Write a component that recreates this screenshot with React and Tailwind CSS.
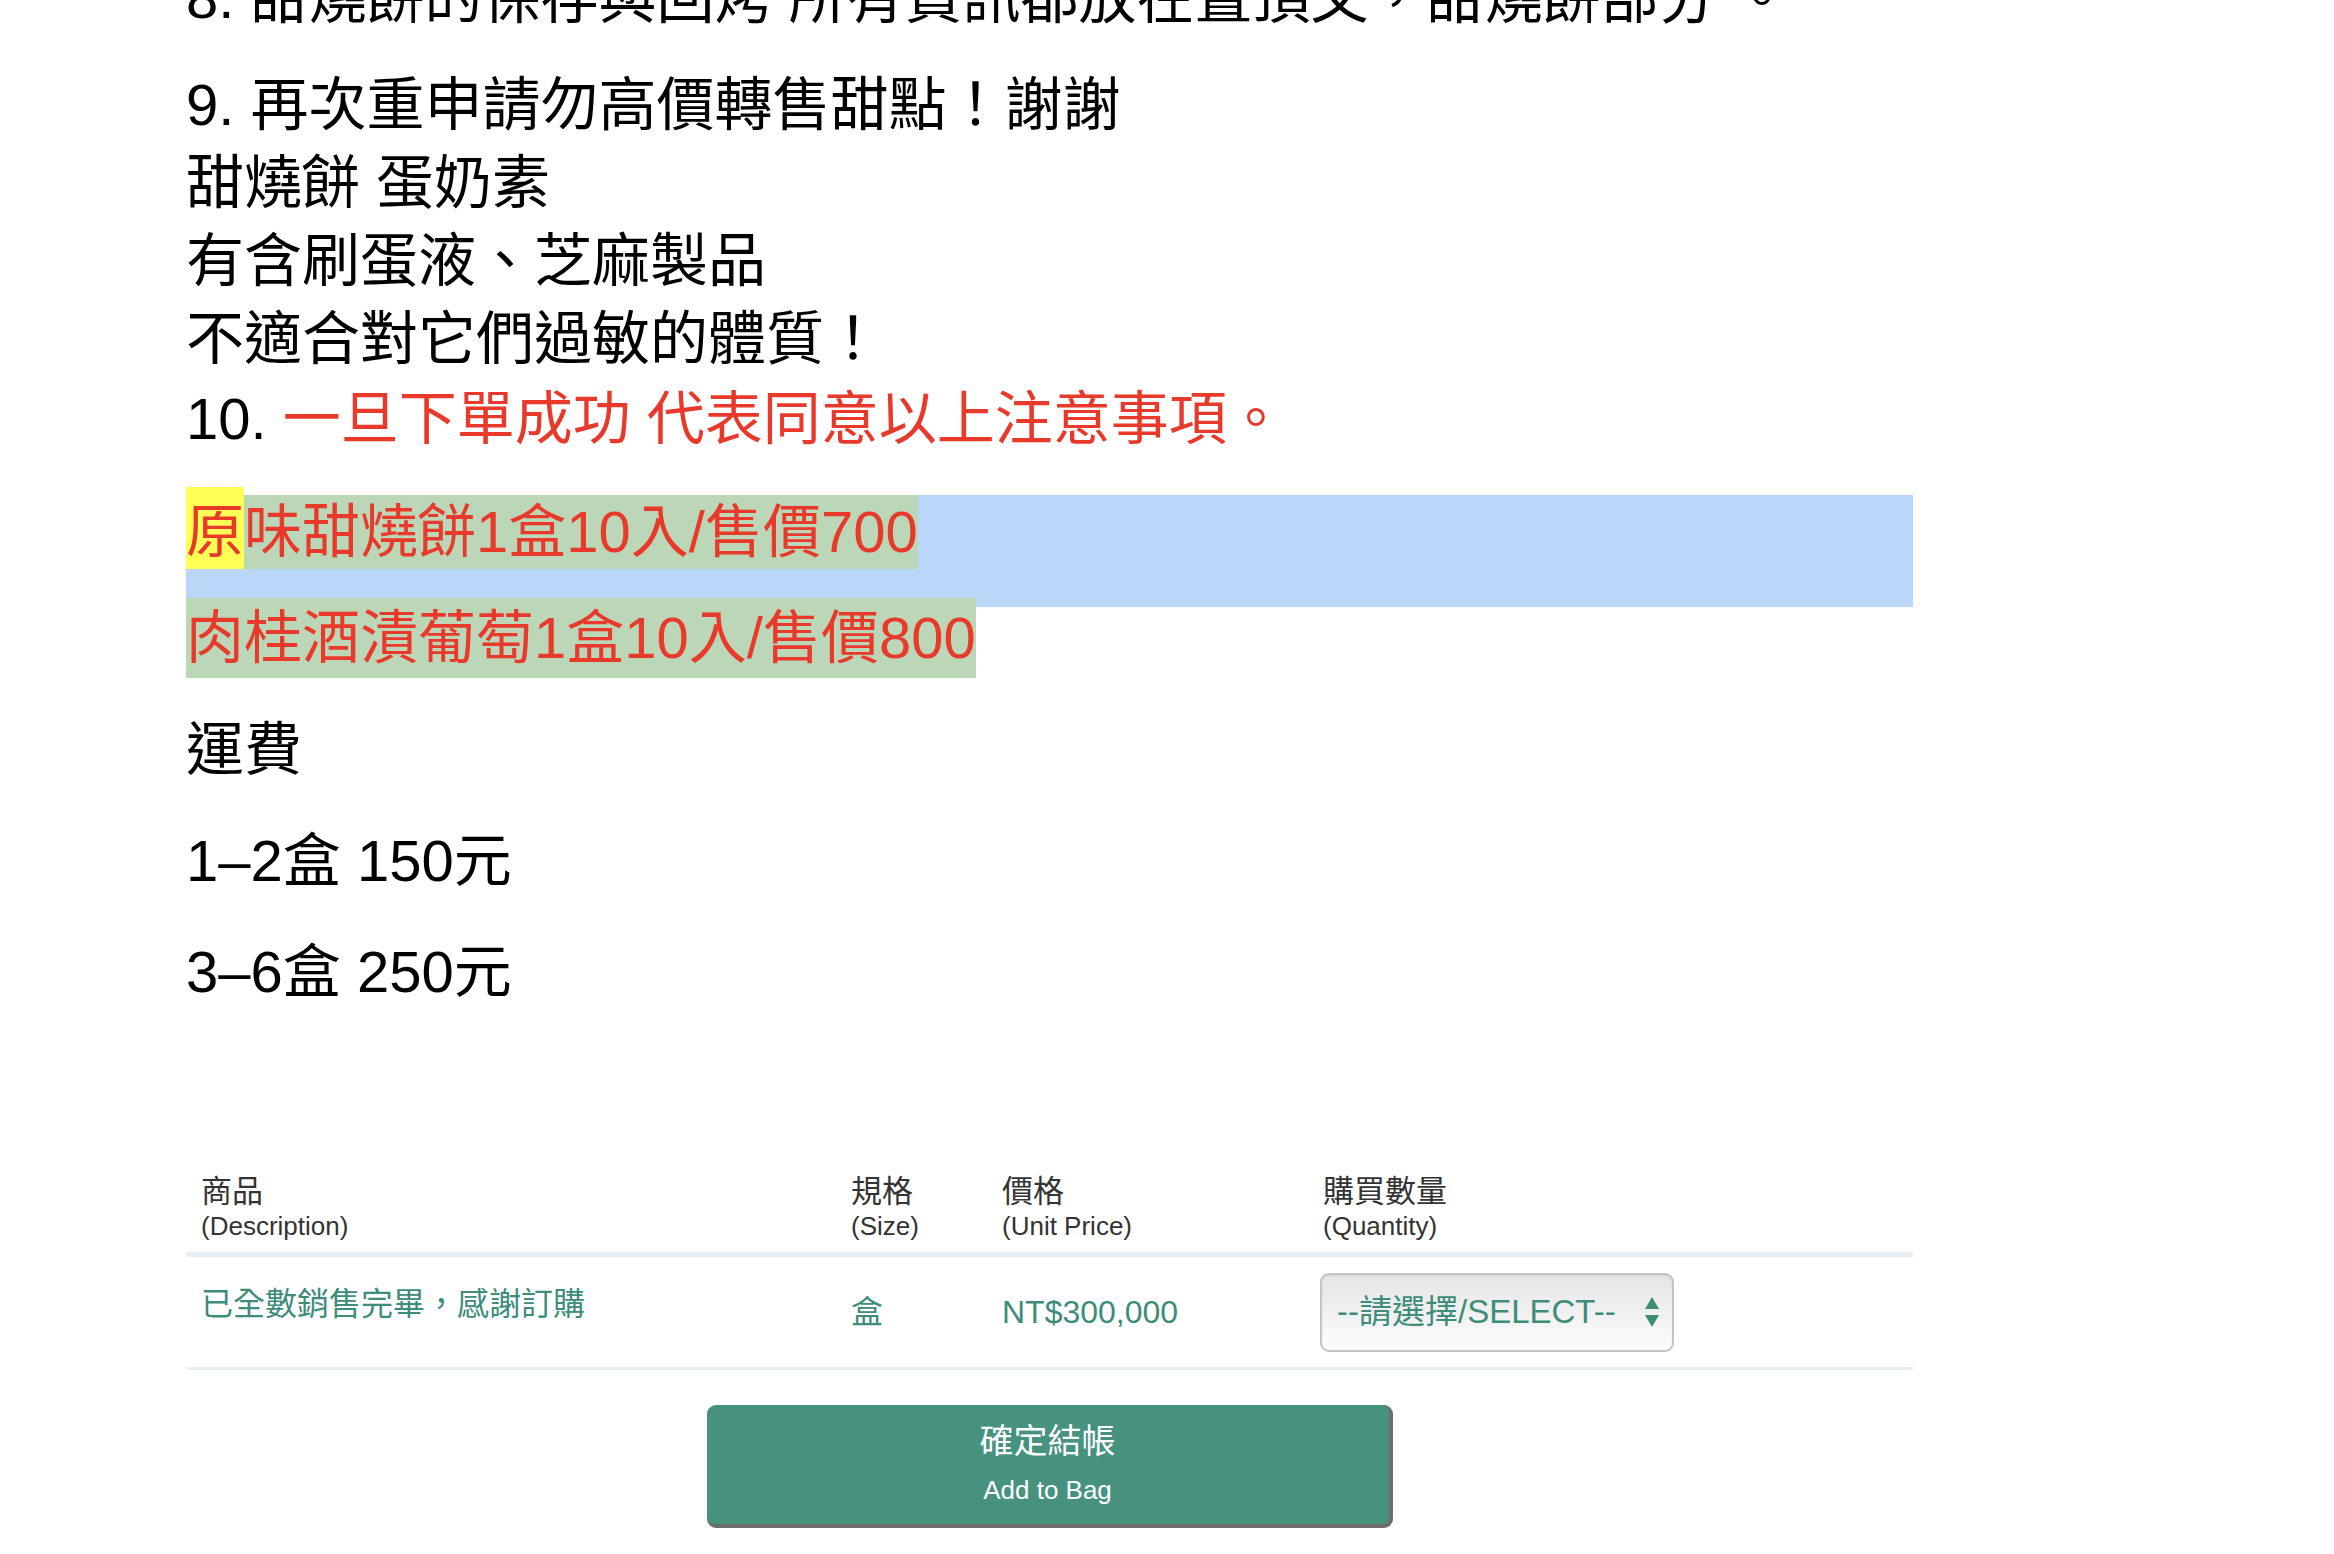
import React from 'react'

const font = { fontFamily: '"Liberation Sans", "Noto Sans CJK TC", sans-serif' }

const Arrows = () => (
  <svg width="16" height="32" viewBox="0 0 16 32" className="shrink-0">
    <path d="M8 1 L15 13 L1 13 Z" fill="#3e8c7a" />
    <path d="M1 19 L15 19 L8 31 Z" fill="#3e8c7a" />
  </svg>
)

const HeadCell = ({ zh, en }) => (
  <th className="pl-[15px] pt-[15px] pb-[10px] text-left font-normal text-[#333]">
    <div className="text-[31px] leading-[36px]">{zh}</div>
    <div className="text-[26px] leading-[32px]">{en}</div>
  </th>
)

const App = () => {
  return (
    <div className="min-h-[1554px] bg-white overflow-hidden" style={font}>
      <div className="ml-[186px] w-[1727px] text-black">
        {/* notes */}
        <div className="-mt-[41px] mb-[29px] text-[58px] leading-[78px] whitespace-nowrap">
          8. 甜燒餅的保存與回烤 所有資訊都放在置頂文，甜燒餅部分 。
        </div>
        <div className="text-[58px] leading-[78px] whitespace-nowrap">
          <div>9. 再次重申請勿高價轉售甜點！謝謝</div>
          <div>甜燒餅 蛋奶素</div>
          <div>有含刷蛋液、芝麻製品</div>
          <div>不適合對它們過敏的體質！</div>
          <div className="mt-[2px]">
            10. <span className="text-[#e8392b]">一旦下單成功 代表同意以上注意事項。</span>
          </div>
        </div>

        {/* price lines */}
        <div className="mt-[37px] h-[112px] bg-[#bad6f9] text-[58px] text-[#e8392b] whitespace-nowrap">
          <div className="leading-[74px]">
            <span className="inline-block bg-[#ffff55] shadow-[0_-8px_0_#ffff55]">原</span>
            <span className="inline-block bg-[#bcd6b8]">味甜燒餅1盒10入/售價700</span>
          </div>
        </div>
        <div className="-mt-[9px] text-[58px] leading-[80px] text-[#e8392b] whitespace-nowrap">
          <span className="inline-block bg-[#bcd6b8]">肉桂酒漬葡萄1盒10入/售價800</span>
        </div>

        {/* shipping */}
        <div className="mt-[33px] text-[58px] leading-[78px]">運費</div>
        <div className="mt-[33px] text-[58px] leading-[78px]">1–2盒 150元</div>
        <div className="mt-[33px] text-[58px] leading-[78px]">3–6盒 250元</div>

        {/* product table */}
        <table className="mt-[148px] w-full table-fixed border-collapse">
          <colgroup>
            <col className="w-[650px]" />
            <col className="w-[151px]" />
            <col className="w-[321px]" />
            <col />
          </colgroup>
          <thead>
            <tr className="border-b-[5px] border-[#e6eef7]">
              <HeadCell zh="商品" en="(Description)" />
              <HeadCell zh="規格" en="(Size)" />
              <HeadCell zh="價格" en="(Unit Price)" />
              <HeadCell zh="購買數量" en="(Quantity)" />
            </tr>
          </thead>
          <tbody>
            <tr className="h-[114px] border-b-[3px] border-[#e8eff7] text-[32px] text-[#3e8c7a]">
              <td className="pl-[15px] pt-[27px] align-top leading-[40px]">已全數銷售完畢，感謝訂購</td>
              <td className="pl-[15px] align-middle">盒</td>
              <td className="pl-[15px] align-middle">NT$300,000</td>
              <td className="pl-[12px] align-middle">
                <div className="flex h-[79px] w-[354px] items-center justify-between rounded-[9px] border-2 border-[#c4c4c4] bg-gradient-to-b from-[#e5e5e5] to-[#fdfdfd] pl-[15px] pr-[12px] shadow-[inset_0_1px_2px_rgba(0,0,0,0.08)]">
                  <span className="text-[33px] whitespace-nowrap">--請選擇/SELECT--</span>
                  <Arrows />
                </div>
              </td>
            </tr>
          </tbody>
        </table>

        {/* checkout */}
        <div className="mt-[35px] flex justify-center">
          <button className="flex h-[123px] w-[686px] flex-col items-center rounded-[9px] border-r-4 border-b-4 border-[#6e6e6e] bg-[#46927f] pt-[14px] text-white">
            <span className="text-[34px] leading-[44px]">確定結帳</span>
            <span className="mt-[10px] text-[26px] leading-[34px]">Add to Bag</span>
          </button>
        </div>
      </div>
    </div>
  )
}

export default App
